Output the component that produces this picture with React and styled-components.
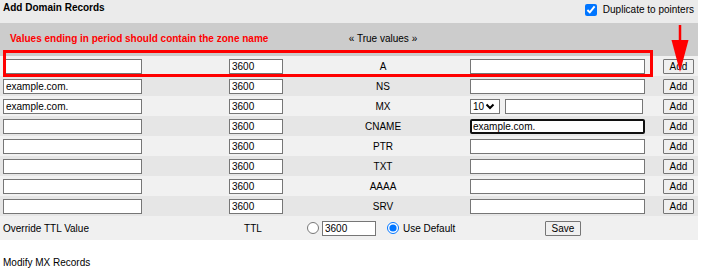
import React from "react";
import styled, { createGlobalStyle } from "styled-components";

const Global = createGlobalStyle`
  html, body { margin: 0; padding: 0; background: #fff; }
  body {
    font-family: "Liberation Sans", Arial, sans-serif;
    font-size: 10px;
    color: #000;
  }
  * { box-sizing: border-box; }
`;

const Page = styled.div`
  width: 708px;
`;

const Panel = styled.div`
  position: relative;
  width: 698px;
`;

const Header = styled.div`
  height: 23px;
  background: #ebebeb;
  display: flex;
  justify-content: space-between;
  align-items: flex-start;
  padding: 2px 4px 0 3px;
`;

const Title = styled.h3`
  margin: 0;
  font-size: 10px;
  font-weight: bold;
  line-height: 12px;
`;

const CheckLabel = styled.label`
  display: flex;
  align-items: center;
  gap: 6px;
  margin-top: 2px;
  line-height: 12px;
`;

const Check = styled.input`
  width: 12px;
  height: 12px;
  margin: 0;
`;

const Grid = styled.div`
  display: grid;
  grid-template-columns: 229px 67px 174px 193px 35px;
  align-items: center;
`;

const NoteRow = styled(Grid)`
  height: 33px;
  padding-bottom: 2px;
  background: #cccccc;
`;

const Note = styled.div`
  grid-column: 1 / 3;
  padding-left: 10px;
  color: #ff0000;
  font-weight: bold;
`;

const Center = styled.div`
  text-align: center;
`;

const Row = styled(Grid)`
  height: 20px;
  background: ${(p) => (p.$alt ? "#e6e6e6" : "#f1f1f1")};
`;

const Field = styled.input`
  height: 15px;
  width: ${(p) => p.$w}px;
  margin-left: ${(p) => p.$ml || 0}px;
  padding: 0 2px;
  font-family: inherit;
  font-size: 10px;
  color: #000;
  background: #fff;
  border: ${(p) => (p.$focused ? "2px solid #101010" : "1px solid #767676")};
  border-radius: ${(p) => (p.$focused ? "2px" : "0")};
  padding-left: ${(p) => (p.$focused ? "1px" : "2px")};
  outline: none;
`;

const ValueCell = styled.div`
  display: flex;
  align-items: center;
  gap: 5px;
`;

const SelectWrap = styled.div`
  position: relative;
  width: 30px;
  height: 15px;
`;

const Select = styled.select`
  appearance: none;
  -webkit-appearance: none;
  display: block;
  width: 30px;
  height: 15px;
  padding: 0 0 0 2px;
  font-family: inherit;
  font-size: 10px;
  line-height: 13px;
  border: 1px solid #767676;
  border-radius: 0;
  background: #fff;
  color: #000;
`;

const Chevron = styled.svg`
  position: absolute;
  left: 15px;
  top: 4px;
  pointer-events: none;
`;

const Btn = styled.button`
  height: 15px;
  width: ${(p) => p.$w}px;
  padding: 0;
  font-family: inherit;
  font-size: 10px;
  line-height: 13px;
  color: #000;
  background: #f0f0f0;
  border: 1px solid #767676;
  border-radius: 1px;
`;

const TtlRow = styled.div`
  display: grid;
  grid-template-columns: 215px 76px 214px 116px 77px;
  align-items: center;
  height: 24px;
  background: #f0f0f0;
`;

const Label = styled.div`
  padding-left: 3px;
`;

const RadioGroup = styled.div`
  display: flex;
  align-items: center;
  padding-left: 16px;
`;

const Radio = styled.input`
  width: 12px;
  height: 12px;
  margin: 0 ${(p) => p.$mr}px 0 ${(p) => p.$ml || 0}px;
`;

const Footer = styled.div`
  padding: 17px 0 0 3px;
`;

const RedBox = styled.div`
  position: absolute;
  left: 3px;
  top: 50px;
  width: 650px;
  height: 27px;
  border: 3px solid #ff0000;
  pointer-events: none;
`;

const Arrow = styled.svg`
  position: absolute;
  left: 668px;
  top: 24px;
  pointer-events: none;
`;

const rows = [
  { type: "A" },
  { type: "NS", name: "example.com." },
  { type: "MX", name: "example.com.", mx: true },
  { type: "CNAME", value: "example.com.", focused: true },
  { type: "PTR" },
  { type: "TXT" },
  { type: "AAAA" },
  { type: "SRV" },
];

export default function App() {
  return (
    <Page>
      <Global />
      <Panel>
        <Header>
          <Title>Add Domain Records</Title>
          <CheckLabel>
            <Check type="checkbox" defaultChecked />
            Duplicate to pointers
          </CheckLabel>
        </Header>
        <NoteRow>
          <Note>Values ending in period should contain the zone name</Note>
          <Center>« True values »</Center>
        </NoteRow>
        {rows.map((r, i) => (
          <Row key={r.type} $alt={i % 2 === 1}>
            <div>
              <Field $w={139} $ml={3} defaultValue={r.name || ""} />
            </div>
            <div>
              <Field $w={54} defaultValue="3600" />
            </div>
            <Center>{r.type}</Center>
            <ValueCell>
              {r.mx ? (
                <>
                  <SelectWrap>
                    <Select defaultValue="10">
                      <option value="10">10</option>
                    </Select>
                    <Chevron width="10" height="7" viewBox="0 0 10 7">
                      <polyline points="1.5,1.5 5,5 8.5,1.5" fill="none" stroke="#000" strokeWidth="2" />
                    </Chevron>
                  </SelectWrap>
                  <Field $w={138} />
                </>
              ) : (
                <Field $w={175} $focused={r.focused} defaultValue={r.value || ""} />
              )}
            </ValueCell>
            <div>
              <Btn $w={31}>Add</Btn>
            </div>
          </Row>
        ))}
        <TtlRow>
          <Label>Override TTL Value</Label>
          <Center>TTL</Center>
          <RadioGroup>
            <Radio type="radio" name="ttl" $mr={3} />
            <Field $w={54} defaultValue="3600" />
            <Radio type="radio" name="ttl" defaultChecked $ml={11} $mr={4} />
            Use Default
          </RadioGroup>
          <Center>
            <Btn $w={36}>Save</Btn>
          </Center>
          <div />
        </TtlRow>
        <RedBox />
        <Arrow width="24" height="50" viewBox="0 0 24 50">
          <line x1="12" y1="1" x2="12" y2="20" stroke="#ff0000" strokeWidth="2.5" />
          <polygon points="3.5,16 20.5,16 12,48" fill="#ff0000" />
        </Arrow>
      </Panel>
      <Footer>Modify MX Records</Footer>
    </Page>
  );
}
